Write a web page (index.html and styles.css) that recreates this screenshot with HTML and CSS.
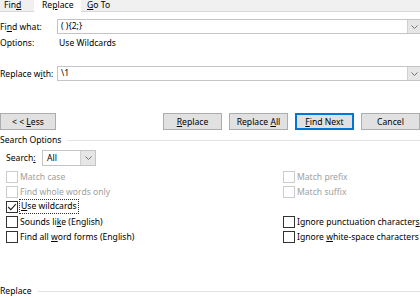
FILE: index.html
```html
<!DOCTYPE html>
<html lang="en">
<head>
  <meta charset="UTF-8" />
  <title>Find and Replace</title>
  <link rel="stylesheet" href="styles.css">
</head>
<body>
  <div class="tabs">
    <div class="tab tab-find">Fin<u>d</u></div>
    <div class="tab tab-replace active">Re<u>p</u>lace</div>
    <div class="tab tab-goto"><u>G</u>o To</div>
  </div>

  <div class="dialog">
    <div class="row row-find">
      <label class="label">Fi<u>n</u>d what:</label>
      <div class="combo">
        <span class="combo-text">( ){2;}</span>
        <span class="combo-btn"><svg width="7" height="4" viewBox="0 0 7 4"><path d="M0.5 0.5 L3.5 3.5 L6.5 0.5" fill="none" stroke="#707070" stroke-width="1"/></svg></span>
      </div>
    </div>
    <div class="row row-options">
      <span class="label">Options:</span>
      <span class="options-value">Use Wildcards</span>
    </div>
    <div class="row row-replace">
      <label class="label">Replace w<u>i</u>th:</label>
      <div class="combo">
        <span class="combo-text">\1</span>
        <span class="combo-btn"><svg width="7" height="4" viewBox="0 0 7 4"><path d="M0.5 0.5 L3.5 3.5 L6.5 0.5" fill="none" stroke="#707070" stroke-width="1"/></svg></span>
      </div>
    </div>

    <div class="buttons">
      <button class="btn btn-less">&lt; &lt; <u>L</u>ess</button>
      <div class="spacer"></div>
      <button class="btn"><u>R</u>eplace</button>
      <button class="btn">Replace <u>A</u>ll</button>
      <button class="btn btn-default"><u>F</u>ind Next</button>
      <button class="btn">Cancel</button>
    </div>

    <div class="group group-search">
      <span>Search Options</span>
      <div class="group-line"></div>
    </div>

    <div class="row row-search">
      <label class="search-label">Search<u>:</u></label>
      <div class="select">
        <span class="select-text">All</span>
        <span class="select-btn"><svg width="7" height="4" viewBox="0 0 7 4"><path d="M0.5 0.5 L3.5 3.5 L6.5 0.5" fill="none" stroke="#707070" stroke-width="1"/></svg></span>
      </div>
    </div>

    <div class="checks">
      <div class="check disabled"><span class="box"></span><span>Match case</span></div>
      <div class="check disabled"><span class="box"></span><span>Match prefix</span></div>
      <div class="check disabled"><span class="box"></span><span>Find whole words only</span></div>
      <div class="check disabled"><span class="box"></span><span>Match suffix</span></div>
      <div class="check"><span class="box"><svg width="10" height="10" viewBox="0 0 10 10"><path d="M1.2 5 L3.8 7.6 L8.8 2.2" fill="none" stroke="#222" stroke-width="1.1"/></svg></span><span class="focus"><u>U</u>se wildcards</span></div>
      <div class="check empty"></div>
      <div class="check"><span class="box"></span><span>Sounds li<u>k</u>e (English)</span></div>
      <div class="check"><span class="box"></span><span>Ignore punctuation character<u>s</u></span></div>
      <div class="check"><span class="box"></span><span>Find all <u>w</u>ord forms (English)</span></div>
      <div class="check"><span class="box"></span><span>Ignore <u>w</u>hite-space characters</span></div>
    </div>

    <div class="group group-replace">
      <span>Replace</span>
      <div class="group-line"></div>
    </div>
  </div>
</body>
</html>
```

FILE: styles.css
```css
body { margin: 0; width: 420px; height: 300px; overflow: hidden; background: #fff; color: #000; font-family: "Noto Sans", "Open Sans", sans-serif; font-size: 8.6px; }
u { text-decoration-thickness: 1px; text-underline-offset: 1px; }

.tabs { display: flex; height: 11px; background: #f0f0f0; border-bottom: 1px solid #d9d9d9; }
.tab { line-height: 11px; white-space: nowrap; }
.tab-find { padding-left: 4px; width: 30px; }
.tab-replace { width: 39px; padding-left: 8px; background: #fff; height: 12px; }
.tab-goto { padding-left: 6px; }

.dialog { display: flex; flex-direction: column; }
.row { display: flex; align-items: center; }
.label { width: 57px; flex: none; white-space: nowrap; }

.row-find { margin-top: 7px; height: 15px; }
.row-options { margin-top: 1px; height: 16px; }
.options-value { padding-left: 2px; }
.row-replace { margin-top: 15px; height: 15px; }

.combo { flex: 1; display: flex; height: 15px; border: 1px solid #c4c4c4; border-right: none; margin-right: -1px; box-sizing: border-box; align-items: stretch; }
.combo-text { flex: 1; padding-left: 3px; line-height: 13px; }
.combo-btn { width: 13px; background: #e6e6e6; border-left: 1px solid #d0d0d0; display: flex; align-items: center; justify-content: center; }

.buttons { display: flex; margin-top: 32px; height: 17px; gap: 7px; }
.spacer { flex: 1; }
.btn { width: 59px; height: 17px; padding: 0; background: #e1e1e1; border: 1px solid #adadad; font: inherit; color: #000; line-height: 14px; }
.btn-less { width: 56px; }
.btn-default { border-color: #0078d7; box-shadow: inset 0 0 0 1px #0078d7; }

.group { display: flex; align-items: center; height: 14px; }
.group span { white-space: nowrap; padding-right: 6px; }
.group-line { flex: 1; border-top: 1px solid #e3e3e3; }
.group-search { margin-top: 3px; }
.group-replace { margin-top: 40px; }

.row-search { margin-top: 3px; height: 16px; padding-left: 6px; }
.search-label { width: 36px; }
.select { width: 54px; height: 16px; display: flex; border: 1px solid #c4c4c4; box-sizing: border-box; }
.select-text { flex: 1; padding-left: 4px; line-height: 14px; }
.select-btn { width: 14px; background: #e6e6e6; border-left: 1px solid #d0d0d0; display: flex; align-items: center; justify-content: center; }

.checks { display: grid; grid-template-columns: 277px 1fr; margin-top: 3px; padding-left: 6px; }
.check { display: flex; align-items: center; height: 15px; white-space: nowrap; }
.box { width: 12px; height: 12px; box-sizing: border-box; border: 1px solid #333; background: #fff; margin-right: 2px; display: flex; align-items: center; justify-content: center; flex: none; }
.check.disabled { color: #a0a0a0; }
.check.disabled .box { border-color: #cccccc; }
.focus { outline: 1px dotted #333; outline-offset: 0; padding: 0 1px; line-height: 13px; }
```
